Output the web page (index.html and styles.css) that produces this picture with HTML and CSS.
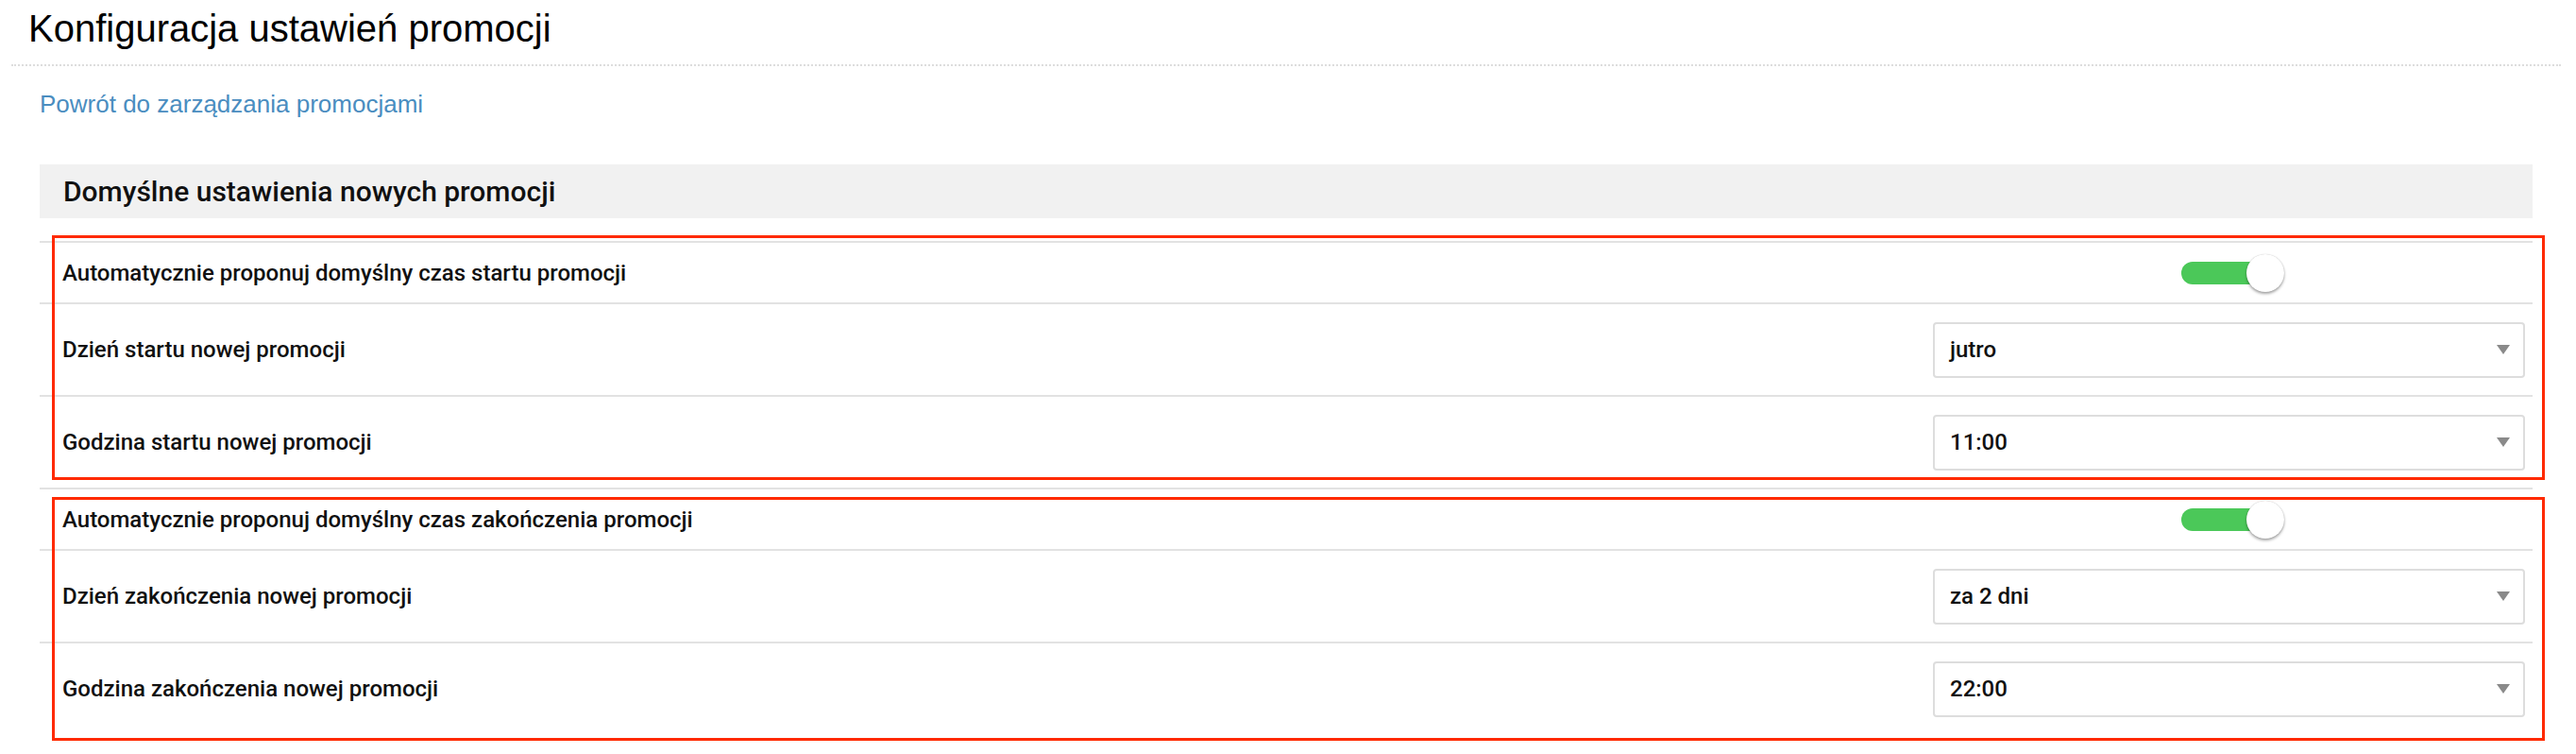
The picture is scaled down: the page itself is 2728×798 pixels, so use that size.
FILE: index.html
```html
<!DOCTYPE html>
<html lang="pl">
<head>
<meta charset="utf-8">
<title>Konfiguracja ustawień promocji</title>
<link rel="stylesheet" href="styles.css">
</head>
<body>
<div class="page">
  <header class="page-head">
    <h1 class="page-title">Konfiguracja ustawień promocji</h1>
  </header>
  <div class="content">
    <a class="back-link" href="#">Powrót do zarządzania promocjami</a>

    <section class="panel">
      <h2 class="panel-title">Domyślne ustawienia nowych promocji</h2>

      <div class="group">
        <div class="row row-toggle">
          <div class="label">Automatycznie proponuj domyślny czas startu promocji</div>
          <div class="control control-center">
            <span class="toggle"><span class="toggle-track"></span><span class="toggle-knob"></span></span>
          </div>
        </div>
        <div class="row row-select">
          <div class="label">Dzień startu nowej promocji</div>
          <div class="control">
            <div class="select"><span class="select-value">jutro</span><span class="select-arrow"></span></div>
          </div>
        </div>
        <div class="row row-select">
          <div class="label">Godzina startu nowej promocji</div>
          <div class="control">
            <div class="select"><span class="select-value">11:00</span><span class="select-arrow"></span></div>
          </div>
        </div>
        <div class="mark mark-first"></div>
      </div>

      <div class="group">
        <div class="row row-toggle">
          <div class="label">Automatycznie proponuj domyślny czas zakończenia promocji</div>
          <div class="control control-center">
            <span class="toggle"><span class="toggle-track"></span><span class="toggle-knob"></span></span>
          </div>
        </div>
        <div class="row row-select">
          <div class="label">Dzień zakończenia nowej promocji</div>
          <div class="control">
            <div class="select"><span class="select-value">za 2 dni</span><span class="select-arrow"></span></div>
          </div>
        </div>
        <div class="row row-select">
          <div class="label">Godzina zakończenia nowej promocji</div>
          <div class="control">
            <div class="select"><span class="select-value">22:00</span><span class="select-arrow"></span></div>
          </div>
        </div>
        <div class="mark mark-second"></div>
      </div>
    </section>
  </div>
</div>
</body>
</html>
```

FILE: styles.css
```css
* { box-sizing: border-box; }

html, body {
  margin: 0;
  padding: 0;
  background: #ffffff;
  min-height: 100vh;
}

body {
  font-family: "Roboto", "Liberation Sans", sans-serif;
  color: #111111;
}

.page {
  padding: 0 16px 21px 12px;
}

.page-head {
  padding: 7px 0 15px 18px;
  border-bottom: 2px dotted #dddddd;
}

.page-title {
  margin: 0;
  font-family: "Liberation Sans", Arial, sans-serif;
  font-weight: 400;
  font-size: 40px;
  line-height: 46px;
  color: #000000;
}

.content {
  padding: 0 30px;
}

.back-link {
  display: inline-block;
  margin-top: 25px;
  font-family: "Liberation Sans", Arial, sans-serif;
  font-size: 26px;
  line-height: 30px;
  color: #4a8dc0;
  text-decoration: none;
}

.panel {
  margin-top: 49px;
}

.panel-title {
  margin: 0;
  height: 57px;
  display: flex;
  align-items: center;
  padding-left: 25px;
  background: #f1f1f1;
  font-family: "Roboto", sans-serif;
  font-weight: 500;
  font-size: 30px;
  color: #111111;
}

.group {
  position: relative;
}

.panel-title + .group {
  margin-top: 24px;
}

.row {
  display: flex;
  align-items: center;
  border-top: 2px solid #e2e2e2;
}

.row-toggle {
  height: 65px;
}

.row-select {
  height: 98px;
}

.label {
  flex: 1;
  padding-left: 24px;
  font-family: "Roboto", sans-serif;
  font-weight: 500;
  font-size: 24px;
  color: #111111;
}

.control {
  width: 635px;
  flex: none;
  padding-right: 8px;
}

.control-center {
  display: flex;
  justify-content: center;
  padding-right: 0;
}

.toggle {
  position: relative;
  display: block;
  width: 109px;
  height: 40px;
}

.toggle-track {
  position: absolute;
  left: 0;
  top: 8px;
  width: 100px;
  height: 24px;
  border-radius: 12px;
  background: #4bc859;
}

.toggle-knob {
  position: absolute;
  right: 0;
  top: 0;
  width: 40px;
  height: 40px;
  border-radius: 50%;
  background: #ffffff;
  box-shadow: 0 2px 3px rgba(0, 0, 0, 0.35), 0 0 1px rgba(0, 0, 0, 0.25);
}

.select {
  display: flex;
  align-items: center;
  justify-content: space-between;
  height: 59px;
  padding: 0 14px 0 16px;
  border: 2px solid #dddddd;
  border-radius: 4px;
  background: #ffffff;
}

.select-value {
  font-family: "Roboto", sans-serif;
  font-weight: 500;
  font-size: 24px;
  color: #111111;
}

.select-arrow {
  width: 0;
  height: 0;
  border-left: 7.5px solid transparent;
  border-right: 7.5px solid transparent;
  border-top: 10px solid #8a8a8a;
}

.mark {
  position: absolute;
  left: 13px;
  right: -13px;
  border: 3px solid #ff2a00;
  pointer-events: none;
}

.mark-first {
  top: -6px;
  height: 259px;
}

.mark-second {
  top: 10px;
  height: 258px;
}
```
